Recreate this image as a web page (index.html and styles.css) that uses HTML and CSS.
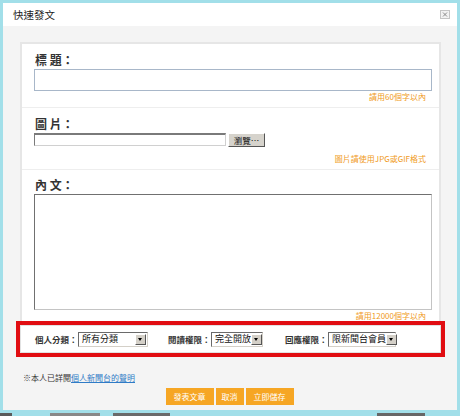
FILE: index.html
```html
<!DOCTYPE html>
<html lang="zh-Hant">
<head>
<meta charset="utf-8">
<title>快速發文</title>
<link rel="stylesheet" href="styles.css">
</head>
<body>
<div class="dialog">
  <div class="header">
    <span class="title">快速發文</span>
    <span class="close"><svg width="10" height="9" viewBox="0 0 10 9"><rect x="0.5" y="0.5" width="9" height="8" fill="#f2f2f2" stroke="#c4c4c4"/><path d="M3 2.5 L7 6.5 M7 2.5 L3 6.5" stroke="#8a8a8a" stroke-width="1"/></svg></span>
  </div>
  <div class="body">
    <div class="panel">
      <div class="section sec-title">
        <div class="label">標 題：</div>
        <div class="text-input"></div>
        <div class="hint">請用60個字以內</div>
      </div>
      <div class="section sec-image">
        <div class="label">圖 片：</div>
        <div class="file-row">
          <div class="file-input"></div>
          <div class="browse">瀏覽…</div>
        </div>
        <div class="hint hint-gap">圖片請使用JPG或GIF格式</div>
      </div>
      <div class="section sec-body">
        <div class="label">內 文：</div>
        <div class="textarea"></div>
        <div class="hint">請用12000個字以內</div>
      </div>
    </div>
    <div class="options">
      <span class="opt-label">個人分類：</span>
      <span class="select sel-1"><span class="sel-text">所有分類</span><span class="arrow"></span></span>
      <span class="opt-label">閱讀權限：</span>
      <span class="select sel-2"><span class="sel-text">完全開放</span><span class="arrow"></span></span>
      <span class="opt-label">回應權限：</span>
      <span class="select sel-3"><span class="sel-text">限新聞台會員</span><span class="arrow"></span></span>
    </div>
    <div class="notice">※本人已詳閱<a class="notice-link" href="#">個人新聞台的聲明</a></div>
    <div class="buttons">
      <span class="btn btn-wide">發表文章</span>
      <span class="btn">取消</span>
      <span class="btn btn-wide">立即儲存</span>
    </div>
  </div>
</div>
<div class="strip">
  <span class="bit b1"></span>
  <span class="bit b2"></span>
  <span class="bit b3"></span>
  <span class="bit b4"></span>
</div>
</body>
</html>
```

FILE: styles.css
```css
* { box-sizing: border-box; }
html, body { margin: 0; padding: 0; }
body {
  width: 460px;
  height: 416px;
  overflow: hidden;
  background: #a2dfe9;
  font-family: "Noto Sans CJK TC", "Noto Sans", sans-serif;
  color: #222;
  padding: 3px 3px 0 3px;
}
.dialog {
  background: #f4f4f4;
  width: 454px;
}
.header {
  height: 23px;
  background: #fff;
  display: flex;
  align-items: center;
  justify-content: space-between;
  padding: 0 7px 0 10px;
}
.title {
  font-size: 10.5px;
  color: #222;
  line-height: 12px;
}
.close { display: flex; }
.body {
  padding: 16px 16px 5px 17px;
}
.panel {
  background: #fff;
  border: 2px solid #e6e6e6;
}
.section {
  padding: 0 7px 0 12px;
  border-bottom: 1px solid #eeeeee;
}
.sec-title { padding-top: 8px; padding-bottom: 4px; }
.sec-image { padding-top: 8px; padding-bottom: 4px; }
.sec-body { padding-top: 7px; border-bottom: none; }
.label {
  font-size: 12px;
  line-height: 15px;
  font-weight: 700;
  color: #333;
  padding-left: 1px;
}
.text-input {
  margin-top: 2px;
  height: 22px;
  border: 1px solid #a8b7c9;
  background: #fff;
}
.hint {
  font-size: 8px;
  line-height: 12px;
  color: #f09a22;
  text-align: right;
  padding-right: 6px;
}
.hint-gap { margin-top: 6px; }
.file-row {
  margin-top: 2px;
  display: flex;
  gap: 2px;
  height: 14px;
}
.file-input {
  width: 192px;
  height: 13px;
  border: 1px solid;
  border-color: #7a7a7a #d0d0d0 #d0d0d0 #7a7a7a;
  border-top-width: 2px;
  background: #fff;
}
.browse {
  width: 37px;
  height: 14px;
  background: #d6d3cc;
  border: 1px solid;
  border-color: #fff #555 #555 #fff;
  font-size: 8.5px;
  line-height: 12px;
  color: #111;
  text-align: center;
}
.textarea {
  margin-top: 2px;
  height: 116px;
  border: 1px solid;
  border-color: #707070 #c4c4c4 #c4c4c4 #707070;
  background: #fff;
}
.options {
  margin-top: 1px;
  height: 28px;
  background: #fff;
  border: 1px solid #e2e2e2;
  outline: 4px solid #e10d12;
  display: flex;
  align-items: center;
  padding-left: 14px;
}
.opt-label {
  width: 43px;
  flex: none;
  white-space: nowrap;
  font-size: 8.5px;
  font-weight: 700;
  color: #333;
  line-height: 12px;
}
.select {
  flex: none;
  height: 15px;
  display: flex;
  align-items: center;
  justify-content: space-between;
  background: #fff;
  border: 1px solid;
  border-color: #6a6a6a #d4d0c8 #d4d0c8 #6a6a6a;
  padding: 0 1px 0 3px;
  font-size: 9px;
  line-height: 12px;
  color: #111;
  margin-right: 20px;
}
.sel-1 { width: 70px; }
.sel-2 { width: 52px; margin-right: 22px; }
.sel-3 { width: 68px; }
.sel-text { white-space: nowrap; }
.arrow {
  width: 11px;
  height: 11px;
  flex: none;
  background: #d4d0c8;
  border: 1px solid;
  border-color: #fff #555 #555 #fff;
  position: relative;
}
.arrow::after {
  content: "";
  position: absolute;
  left: 2px;
  top: 3px;
  border-left: 2.5px solid transparent;
  border-right: 2.5px solid transparent;
  border-top: 3px solid #000;
}
.notice {
  margin-top: 18px;
  padding-left: 3px;
  font-size: 8px;
  line-height: 14px;
  color: #333;
}
.notice-link {
  color: #2f7bc6;
  text-decoration: underline;
}
.buttons {
  margin-top: 3px;
  display: flex;
  justify-content: center;
  gap: 2px;
  padding-right: 2px;
}
.btn {
  height: 17px;
  padding: 0 6px;
  background: #f6a624;
  color: #fff;
  font-size: 8px;
  line-height: 17px;
  white-space: nowrap;
}
.btn-wide { width: 48px; text-align: center; padding: 0; }
.strip {
  margin: 3px -3px 0 -3px;
  height: 3px;
  display: flex;
}
.bit { height: 3px; background: #5a5a5a; }
.b1 { width: 12px; }
.b2 { width: 50px; margin-left: 38px; background: #888; }
.b3 { width: 57px; margin-left: 13px; background: #6a6a6a; }
.b4 { width: 48px; margin-left: 207px; background: #666; }
```
